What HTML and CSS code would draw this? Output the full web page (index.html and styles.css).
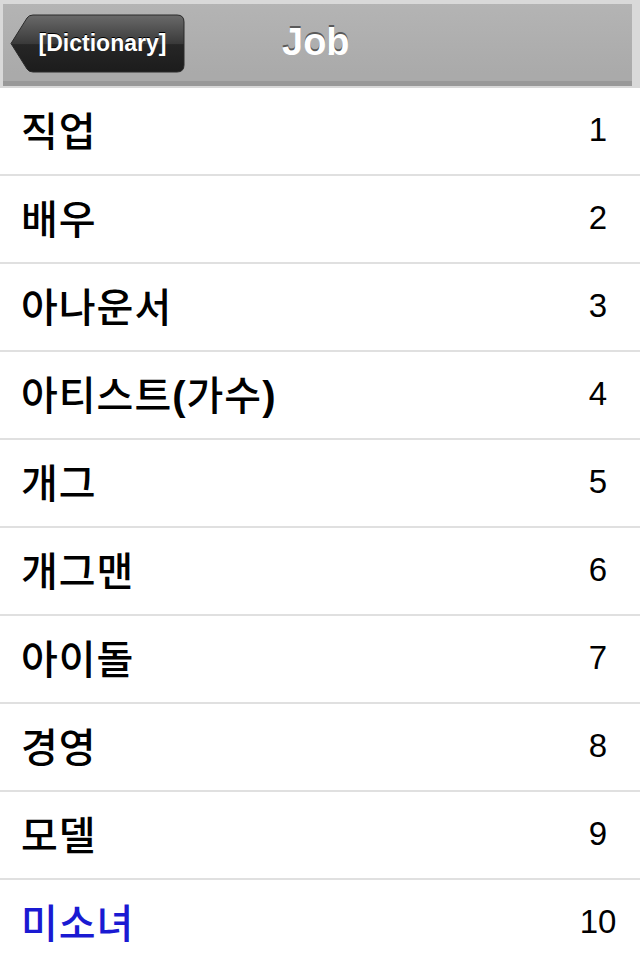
FILE: index.html
```html
<!DOCTYPE html>
<html lang="ko">
<head>
    <meta charset="UTF-8">
    <meta name="viewport" content="width=device-width, initial-scale=1.0">
    <title>Job</title>
    <link rel="stylesheet" href="styles.css">
</head>
<body>

    <div class="navbar">
        <div class="navbar-inner">
            <div class="back-btn">
                <svg class="back-shape" width="175" height="59" viewBox="0 0 175 59">
                    <defs>
                        <linearGradient id="btnGrad" x1="0" y1="0" x2="0" y2="1">
                            <stop offset="0" stop-color="#6a6a6a"/>
                            <stop offset="0.5" stop-color="#3a3a3a"/>
                            <stop offset="0.52" stop-color="#262626"/>
                            <stop offset="1" stop-color="#1c1c1c"/>
                        </linearGradient>
                    </defs>
                    <path d="M1 29.5 L17 4 Q19 1 23 1 L167 1 Q174 1 174 8 L174 51 Q174 58 167 58 L23 58 Q19 58 17 55 Z" fill="url(#btnGrad)" stroke="#2a2a2a" stroke-width="1"/>
                </svg>
                <span class="back-label">[Dictionary]</span>
            </div>
            <h1 class="title">Job</h1>
        </div>
    </div>

    <ul class="list">
        <li class="row"><span class="word">직업</span><span class="num">1</span></li>
        <li class="row"><span class="word">배우</span><span class="num">2</span></li>
        <li class="row"><span class="word">아나운서</span><span class="num">3</span></li>
        <li class="row"><span class="word">아티스트<b>(</b>가수<b>)</b></span><span class="num">4</span></li>
        <li class="row"><span class="word">개그</span><span class="num">5</span></li>
        <li class="row"><span class="word">개그맨</span><span class="num">6</span></li>
        <li class="row"><span class="word">아이돌</span><span class="num">7</span></li>
        <li class="row"><span class="word">경영</span><span class="num">8</span></li>
        <li class="row"><span class="word">모델</span><span class="num">9</span></li>
        <li class="row current"><span class="word">미소녀</span><span class="num">10</span></li>
    </ul>

</body>
</html>
```

FILE: styles.css
```css
body {
    margin: 0;
    background-color: #ffffff;
    font-family: "Liberation Sans", Arial, sans-serif;
    overflow: hidden;
}

.navbar {
    height: 88px;
    background-color: #d9d9d9;
    padding: 4px 8px 2px 3px;
    box-sizing: border-box;
}

.navbar-inner {
    height: 82px;
    background: linear-gradient(to bottom, #b4b4b4, #aaaaaa 90%);
    border-bottom: 5px solid #999999;
    box-sizing: border-box;
    display: flex;
    align-items: center;
    padding-left: 7px;
}

.back-btn {
    position: relative;
    width: 175px;
    height: 59px;
    margin-top: 2px;
}

.back-shape {
    display: block;
}

.back-label {
    position: absolute;
    left: 10px;
    top: 0;
    right: 0;
    bottom: 0;
    display: flex;
    align-items: center;
    justify-content: center;
    color: #ffffff;
    font-weight: bold;
    font-size: 23px;
    text-shadow: 0 -1px 0 #000000;
}

.title {
    margin: 0 0 0 97px;
    color: #ffffff;
    font-size: 38px;
    font-weight: bold;
    text-shadow: 0 -2px 0 #5a5a5a;
}

.list {
    list-style: none;
    margin: 0;
    padding: 0;
}

.row {
    height: 88px;
    box-sizing: border-box;
    border-bottom: 2px solid #e0e0e0;
    display: flex;
    align-items: center;
    justify-content: space-between;
    padding: 0 12px 0 21px;
}

.word {
    font-family: "Liberation Sans", "Noto Sans CJK KR", sans-serif;
    font-size: 40px;
    font-weight: 500;
    letter-spacing: 1px;
    color: #000000;
    margin-bottom: 5px;
}

.word b {
    font-weight: bold;
}

.num {
    width: 60px;
    text-align: center;
    font-size: 33px;
    color: #000000;
    margin-bottom: 2px;
}

.current .word {
    color: #1a1ad2;
}
```
